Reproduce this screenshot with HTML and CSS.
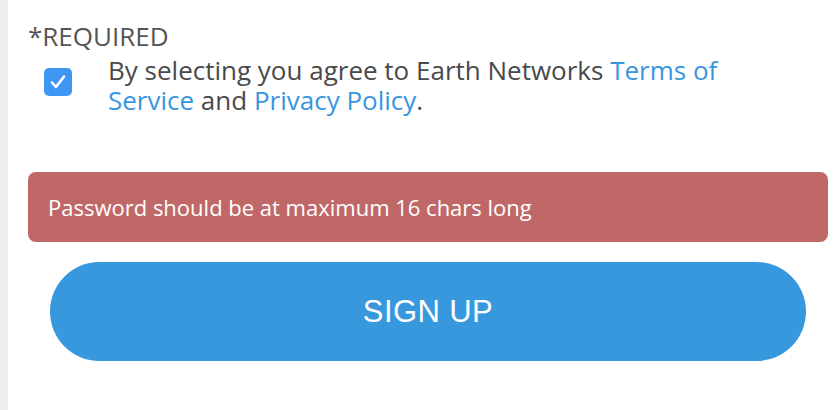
FILE: index.html
```html
<!DOCTYPE html>
<html>
<head>
<meta charset="utf-8">
<link rel="stylesheet" href="styles.css">
</head>
<body>
<div class="page">
  <div class="strip"></div>
  <div class="content">
    <div class="required">*REQUIRED</div>
    <div class="agree">
      <span class="check">
        <svg width="28" height="28" viewBox="0 0 28 28"><rect x="0" y="0" width="28" height="28" rx="5" fill="#3e97f2"/><path d="M8 14.5 L12 19 L20 8.5" fill="none" stroke="#fff" stroke-width="2.6" stroke-linecap="round" stroke-linejoin="round"/></svg>
      </span>
      <p class="agree-text">By selecting you agree to Earth Networks <a class="link">Terms of Service</a> and <a class="link">Privacy Policy</a>.</p>
    </div>
    <div class="error">Password should be at maximum 16 chars long</div>
    <div class="btn-row"><button class="signup">SIGN UP</button></div>
  </div>
</div>
</body>
</html>
```
FILE: styles.css
```css
html, body { margin: 0; padding: 0; background: #fff; }
.page { display: flex; width: 840px; height: 410px; overflow: hidden; }
.strip { width: 8px; background: #eeeeee; flex: none; }
.content { flex: 1; padding: 20px 12px 0 20px; font-family: "Open Sans", sans-serif; }
.required { font-size: 26px; line-height: 32px; color: #555; }
.agree { display: flex; align-items: flex-start; margin-top: 3px; }
.check { width: 28px; height: 28px; margin: 13px 0 0 16px; flex: none; display: block; }
.check svg { display: block; }
.agree-text { margin: 0 0 0 36px; font-size: 26px; line-height: 30px; color: #4a4a4a; width: 680px; }
.link { color: #3896e0; text-decoration: none; }
.error { margin-top: 57px; height: 70px; border-radius: 8px; background: #c06868; color: #fff; font-size: 22px; font-weight: 500; display: flex; align-items: center; padding-left: 20px; }
.btn-row { padding: 20px 0 0 22px; }
.signup { display: block; width: 756px; height: 99px; border: 0; border-radius: 50px; background: #3898de; color: #fff; font-family: "Liberation Sans", Arial, sans-serif; font-size: 31px; letter-spacing: 0.4px; padding: 0; }
```
